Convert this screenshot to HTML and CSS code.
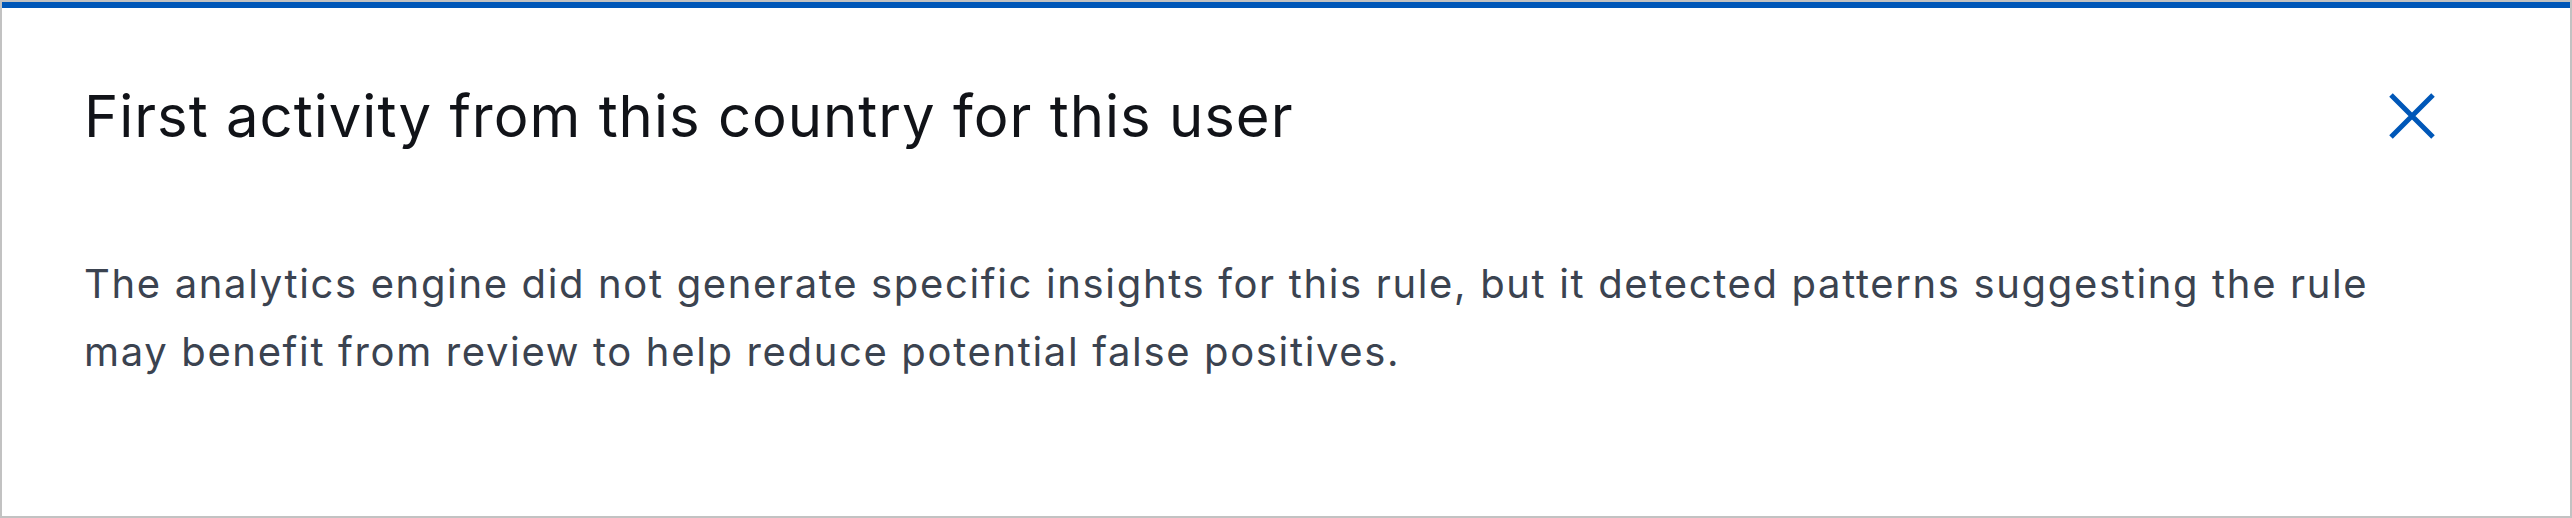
FILE: index.html
```html
<!DOCTYPE html>
<html>
<head>
<meta charset="utf-8">
<link rel="stylesheet" href="styles.css">
</head>
<body>
<div class="panel">
  <div class="header">
    <h2 class="title">First activity from this country for this user</h2>
    <button class="close" aria-label="Close">
      <svg width="46" height="46" viewBox="0 0 46 46"><path d="M2 2 L44 44 M44 2 L2 44" stroke="#0057b8" stroke-width="5" fill="none"/></svg>
    </button>
  </div>
  <p class="body">The analytics engine did not generate specific insights for this rule, but it detected patterns suggesting the rule may benefit from review to help reduce potential false positives.</p>
</div>
</body>
</html>
```
FILE: styles.css
```css
html, body { margin: 0; padding: 0; }
body { font-family: Inter, "Noto Sans", sans-serif; background: #fff; }
.panel {
  box-sizing: border-box;
  width: 2572px;
  height: 518px;
  border: 2px solid #c2c2c2;
  position: relative;
  background: #fff;
  padding: 0 0 0 82px;
}
.panel::before {
  content: "";
  position: absolute;
  left: 0; right: 0; top: 0;
  height: 6px;
  background: #0057b8;
}
.header {
  display: flex;
  align-items: center;
  justify-content: space-between;
  padding-top: 80px;
  padding-right: 135px;
}
.title {
  margin: 0;
  font-weight: 400;
  font-size: 58px;
  letter-spacing: 1px;
  line-height: 68px;
  color: #111318;
}
.close {
  border: 0;
  background: none;
  padding: 0;
  width: 46px;
  height: 46px;
  display: flex;
}
.body {
  margin: 100px 0 0 0;
  max-width: 2330px;
  font-size: 40px;
  letter-spacing: 1.65px;
  line-height: 68px;
  color: #3b4350;
}
```
